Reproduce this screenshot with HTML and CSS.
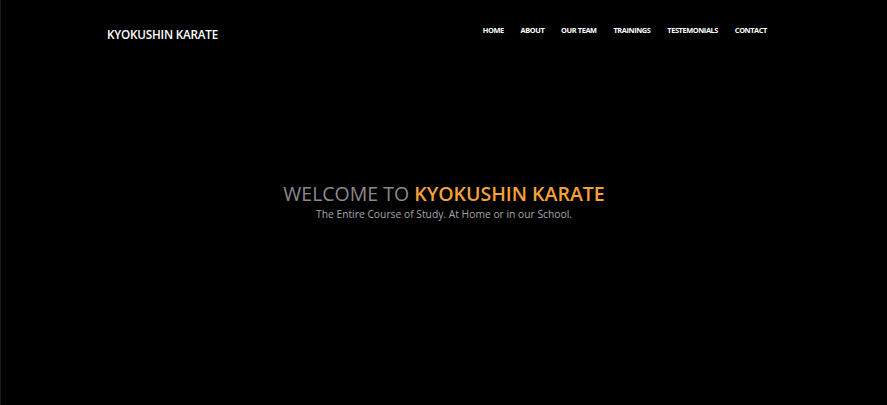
FILE: index.html
```html
<!DOCTYPE html>
<html lang="en">
<head>
<meta charset="utf-8">
<title>Kyokushin Karate</title>
<link rel="stylesheet" href="styles.css">
</head>
<body>
<div class="page">
  <header class="topbar">
    <div class="brand">KYOKUSHIN KARATE</div>
    <nav class="nav">
      <a href="#">HOME</a>
      <a href="#">ABOUT</a>
      <a href="#">OUR TEAM</a>
      <a href="#">TRAININGS</a>
      <a href="#">TESTEMONIALS</a>
      <a href="#">CONTACT</a>
    </nav>
  </header>
  <section class="hero">
    <h1 class="hero-title">WELCOME TO <span class="accent">KYOKUSHIN KARATE</span></h1>
    <p class="hero-sub">The Entire Course of Study. At Home or in our School.</p>
  </section>
</div>
</body>
</html>
```
FILE: styles.css
```css
html, body {
  margin: 0;
  padding: 0;
  background: #000;
  height: 100%;
}
body {
  font-family: "Open Sans", "DejaVu Sans", sans-serif;
}
.page {
  height: 405px;
  box-sizing: border-box;
  border-left: 1px solid #1a1a1a;
  display: flex;
  flex-direction: column;
}
.topbar {
  display: flex;
  justify-content: space-between;
  align-items: center;
  padding: 25px 120px 0 106px;
}
.brand {
  color: #fff;
  font-size: 11.7px;
  font-weight: 600;
  letter-spacing: -0.2px;
  line-height: 18px;
}
.nav {
  display: flex;
  gap: 16.8px;
  margin-top: -8px;
}
.nav a {
  color: #fff;
  text-decoration: none;
  font-size: 7.4px;
  font-weight: 700;
  letter-spacing: -0.4px;
}
.hero {
  text-align: center;
  margin-top: 138px;
}
.hero-title {
  margin: 0;
  font-size: 19.5px;
  font-weight: 400;
  color: #8a8a8a;
  line-height: 26px;
}
.accent {
  color: #f5a038;
  font-weight: 600;
}
.hero-sub {
  margin: 0;
  font-size: 10.3px;
  color: #a6a6a6;
  line-height: 15px;
}
```
